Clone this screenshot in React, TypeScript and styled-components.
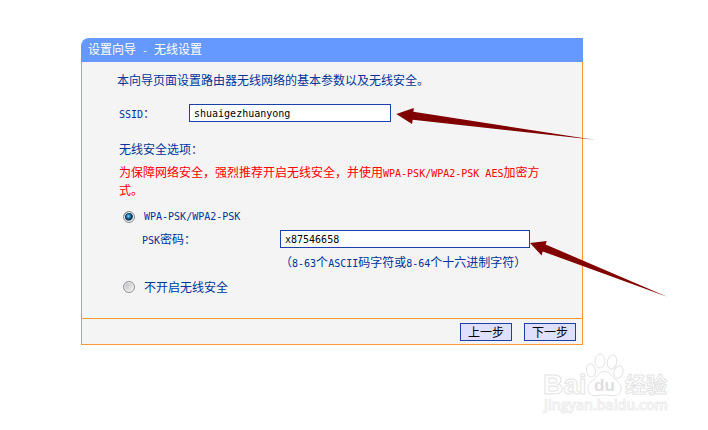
import React, { useState } from "react";
import styled, { createGlobalStyle } from "styled-components";

const GlobalStyle = createGlobalStyle`
  * { box-sizing: border-box; }
  body {
    margin: 0;
    background: #fff;
    color: #003399;
    font: 12px/18px "Noto Sans CJK SC", sans-serif;
    text-spacing-trim: space-all;
  }
  p, h1, h2 { margin: 0; font-size: 12px; font-weight: normal; }
`;

const Page = styled.main`
  min-height: 430px;
  padding: 38px 125px 0 81px;
  position: relative;
`;

const Wizard = styled.form`
  display: flex;
  flex-direction: column;
`;

const Header = styled.header`
  height: 24px;
  padding: 2px 7px;
  background: #6699ff;
  color: #fff;
  border-top-left-radius: 8px;
`;

const Body = styled.div`
  display: flex;
  flex-direction: column;
  padding: 9px 40px 22px 37px;
  background: #f4f4f4;
  border: solid #ff9933;
  border-width: 0 1px;
`;

const Intro = styled.p`
  margin-left: -2px;
`;

const Latin = styled.span`
  font-family: "DejaVu Sans Mono", monospace;
  font-size: 10px;
  line-height: 1;
  white-space: pre-wrap;
`;

const Field = styled.div<{ $label: number; $top: number; $indent?: number }>`
  display: grid;
  grid-template-columns: ${(p) => p.$label}px minmax(0, 1fr);
  row-gap: 5px;
  margin-top: ${(p) => p.$top}px;
  margin-left: ${(p) => p.$indent ?? 0}px;
`;

const TextBox = styled.input<{ $max: number }>`
  width: 100%;
  max-width: ${(p) => p.$max}px;
  height: 18px;
  padding: 0 4px;
  border: 1px solid #1c40ab;
  border-radius: 0;
  background: #fff;
  color: #000;
  font: 10px "DejaVu Sans Mono", monospace;
  outline: none;
`;

const Hint = styled.p`
  grid-column: 2;
  white-space: nowrap;
`;

const SectionTitle = styled.h2`
  margin-top: 18px;
`;

const Warning = styled.p`
  margin-top: 5px;
  color: #ff0000;
`;

const Option = styled.label<{ $top: number }>`
  display: flex;
  align-items: center;
  gap: 9px;
  min-height: 18px;
  margin-top: ${(p) => p.$top}px;
  padding-left: 4px;
`;

const Radio = styled.input`
  appearance: none;
  width: 12px;
  height: 12px;
  margin: 0;
  border: 1px solid #909090;
  border-radius: 50%;
  background: linear-gradient(135deg, #b4b9be, #f8f8f8);
  box-shadow: inset 0 0 0 1px #f2f2f2;

  &:checked {
    background: radial-gradient(circle at 45% 42%, #8be0f8 0, #2483b8 20%, #103b62 38%, #183f60 50%, #d5dce2 62%);
  }
`;

const Footer = styled.footer`
  display: flex;
  justify-content: flex-end;
  gap: 12px;
  padding: 4px 6px 3px;
  background: #f4f4f4;
  border: 1px solid #ff9933;
`;

const StepButton = styled.button`
  width: 52px;
  height: 18px;
  padding: 0;
  border: 1px solid #1c40ab;
  background: #dfdfff;
  color: #000;
  font: 12px/14px "Noto Sans CJK SC", sans-serif;
`;

const Overlay = styled.svg`
  position: absolute;
  top: 0;
  left: 0;
  pointer-events: none;
`;

function Arrows() {
  return (
    <Overlay width="708" height="430" viewBox="0 0 708 430" aria-hidden="true">
      <g fill="#800000">
        <path d="M396.3 114 L413.8 108 L413.4 111.8 L594 139.7 L412.7 119.8 L412 124Z" />
        <path d="M530 243 L546.8 241 L545.6 244.5 L667.8 297 L542.7 251.4 L541.6 255.4Z" />
      </g>
    </Overlay>
  );
}

function Watermark() {
  return (
    <Overlay width="708" height="430" viewBox="0 0 708 430" role="img" aria-label="Baidu">
      <g fill="#fff" stroke="#e4e4e4" strokeWidth="1" strokeLinejoin="round">
        <text x="543" y="394" fontFamily="Liberation Sans" fontWeight="bold" fontSize="28">Bai</text>
        <ellipse cx="591" cy="370.5" rx="4.5" ry="6.5" transform="rotate(-10 591 370.5)" />
        <ellipse cx="600" cy="361" rx="5" ry="7" />
        <ellipse cx="612" cy="362" rx="4.7" ry="7" transform="rotate(10 612 362)" />
        <ellipse cx="618.5" cy="372" rx="4.5" ry="6.5" transform="rotate(20 618.5 372)" />
        <path d="M604.500 371.500c-6 0-7 5-11 8.500-4 3-6.500 6-5.500 10 1 5 5 6.500 10 5.500 4-.8 8-.8 12 0 6 1 10.500-1 11-6 .4-4-2-7-5-9.500-4.500-3.500-5.500-8.500-11.500-8.500Z" />
        <text x="625" y="392" fontFamily="Noto Sans CJK SC" fontWeight="bold" fontSize="21">经验</text>
      </g>
      <text x="594" y="391" fill="#e0e0e0" fontFamily="Liberation Sans" fontWeight="bold" fontSize="17">du</text>
      <text x="544" y="410" fill="#fff" stroke="#ededed" strokeWidth="1" fontFamily="Open Sans" fontWeight="600" fontSize="14">jingyan.baidu.com</text>
    </Overlay>
  );
}

export default function App() {
  const [ssid, setSsid] = useState("shuaigezhuanyong");
  const [password, setPassword] = useState("x87546658");
  const [security, setSecurity] = useState("psk");

  return (
    <>
      <GlobalStyle />
      <Page>
        <Wizard onSubmit={(e) => e.preventDefault()}>
          <Header>
            <h1>设置向导<Latin> - </Latin>无线设置</h1>
          </Header>
          <Body>
            <Intro>本向导页面设置路由器无线网络的基本参数以及无线安全。</Intro>
            <Field $label={70} $top={15}>
              <label htmlFor="ssid"><Latin>SSID</Latin>：</label>
              <TextBox id="ssid" $max={202} value={ssid} onChange={(e) => setSsid(e.target.value)} spellCheck={false} />
            </Field>
            <SectionTitle>无线安全选项：</SectionTitle>
            <Warning>
              为保障网络安全，强烈推荐开启无线安全，并使用<Latin>WPA-PSK/WPA2-PSK AES</Latin>加密方式。
            </Warning>
            <Option $top={9}>
              <Radio type="radio" name="security" checked={security === "psk"} onChange={() => setSecurity("psk")} />
              <Latin>WPA-PSK/WPA2-PSK</Latin>
            </Option>
            <Field $label={138} $top={4} $indent={23}>
              <label htmlFor="psk"><Latin>PSK</Latin>密码：</label>
              <TextBox id="psk" $max={250} value={password} onChange={(e) => setPassword(e.target.value)} spellCheck={false} />
              <Hint>
                （<Latin>8-63</Latin>个<Latin>ASCII</Latin>码字符或<Latin>8-64</Latin>个十六进制字符）
              </Hint>
            </Field>
            <Option $top={7}>
              <Radio type="radio" name="security" checked={security === "none"} onChange={() => setSecurity("none")} />
              <span>不开启无线安全</span>
            </Option>
          </Body>
          <Footer>
            <StepButton type="button">上一步</StepButton>
            <StepButton type="submit">下一步</StepButton>
          </Footer>
        </Wizard>
        <Arrows />
        <Watermark />
      </Page>
    </>
  );
}
